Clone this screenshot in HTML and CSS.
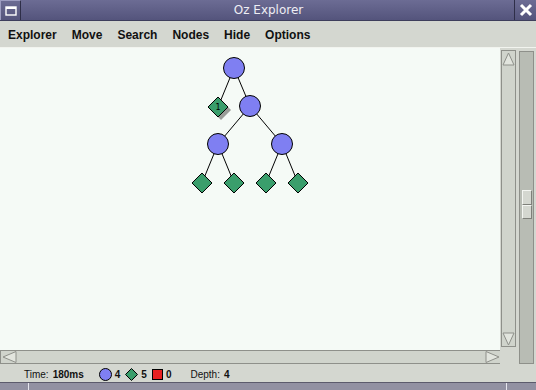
FILE: index.html
```html
<!DOCTYPE html>
<html lang="en">
<head>
    <meta charset="UTF-8">
    <meta name="viewport" content="width=device-width, initial-scale=1.0">
    <title>Oz Explorer</title>

    <link rel="stylesheet" href="styles.css">
</head>
<body>

    <div class="window">
        <div class="titlebar">
            <div class="title-btn title-menu">
                <svg width="12" height="10" viewBox="0 0 12 10">
                    <rect x="1" y="1" width="10" height="8" fill="none" stroke="#fff" stroke-width="1.4"/>
                    <line x1="1" y1="2" x2="11" y2="2" stroke="#fff" stroke-width="2"/>
                </svg>
            </div>
            <div class="title-text">Oz Explorer</div>
            <div class="title-btn title-close">
                <svg width="14" height="14" viewBox="0 0 14 14">
                    <path d="M2 2 L12 12 M12 2 L2 12" stroke="#fff" stroke-width="3"/>
                </svg>
            </div>
        </div>

        <div class="menubar">
            <span class="menu-item">Explorer</span>
            <span class="menu-item">Move</span>
            <span class="menu-item">Search</span>
            <span class="menu-item">Nodes</span>
            <span class="menu-item">Hide</span>
            <span class="menu-item">Options</span>
        </div>

        <div class="main">
            <div class="viewport">
                <div class="canvas">
                    <svg class="tree" width="500" height="302" viewBox="0 0 500 302">
                        <g stroke="#000" stroke-width="1">
                            <line x1="234" y1="20" x2="218" y2="59"/>
                            <line x1="234" y1="20" x2="250" y2="58"/>
                            <line x1="250" y1="58" x2="218" y2="96"/>
                            <line x1="250" y1="58" x2="282" y2="96"/>
                            <line x1="218" y1="96" x2="202" y2="135"/>
                            <line x1="218" y1="96" x2="234" y2="135"/>
                            <line x1="282" y1="96" x2="266" y2="135"/>
                            <line x1="282" y1="96" x2="298" y2="135"/>
                        </g>
                        <g fill="#7f7ff2" stroke="#000" stroke-width="1">
                            <circle cx="234" cy="20" r="10.5"/>
                            <circle cx="250" cy="58" r="10.5"/>
                            <circle cx="218" cy="96" r="10.5"/>
                            <circle cx="282" cy="96" r="10.5"/>
                        </g>
                        <path d="M221 52 L231 62 L221 72 L211 62 Z" fill="#9a9c98"/>
                        <g fill="#3a9e6c" stroke="#000" stroke-width="1">
                            <path d="M218 49 L228 59 L218 69 L208 59 Z"/>
                            <path d="M202 125 L212 135 L202 145 L192 135 Z"/>
                            <path d="M234 125 L244 135 L234 145 L224 135 Z"/>
                            <path d="M266 125 L276 135 L266 145 L256 135 Z"/>
                            <path d="M298 125 L308 135 L298 145 L288 135 Z"/>
                        </g>
                        <text x="218" y="62" class="node-label">1</text>
                    </svg>
                </div>
                <div class="hscroll">
                    <div class="arrow-btn">
                        <svg width="15" height="12" viewBox="0 0 15 12">
                            <path d="M1 6 L14 0.5 L14 11.5 Z" fill="#e2e5de" stroke="#8e908a"/>
                        </svg>
                    </div>
                    <div class="track"></div>
                    <div class="arrow-btn">
                        <svg width="15" height="12" viewBox="0 0 15 12">
                            <path d="M14 6 L1 0.5 L1 11.5 Z" fill="#e2e5de" stroke="#8e908a"/>
                        </svg>
                    </div>
                </div>
            </div>

            <div class="vscroll">
                <div class="arrow-btn">
                    <svg width="13" height="14" viewBox="0 0 13 14">
                        <path d="M6.5 1 L12 13 L1 13 Z" fill="#e2e5de" stroke="#8e908a"/>
                    </svg>
                </div>
                <div class="track"></div>
                <div class="arrow-btn">
                    <svg width="13" height="14" viewBox="0 0 13 14">
                        <path d="M6.5 13 L12 1 L1 1 Z" fill="#e2e5de" stroke="#8e908a"/>
                    </svg>
                </div>
            </div>

            <div class="scale">
                <div class="scale-thumb">
                    <div class="thumb-half"></div>
                    <div class="thumb-half"></div>
                </div>
            </div>
        </div>

        <div class="status">
            <span class="st-label">Time:</span>
            <b class="st-value">180ms</b>
            <span class="st-icon st-choice"></span>
            <b class="st-count">4</b>
            <svg class="st-icon st-solved" width="13" height="13" viewBox="0 0 13 13">
                <path d="M6.5 0.5 L12.5 6.5 L6.5 12.5 L0.5 6.5 Z" fill="#3a9e6c" stroke="#000"/>
            </svg>
            <b class="st-count">5</b>
            <span class="st-icon st-failed"></span>
            <b class="st-count">0</b>
            <span class="st-label st-depth">Depth:</span>
            <b class="st-count">4</b>
        </div>

        <div class="taskbar">
            <div class="task task-left"></div>
            <div class="task task-mid"></div>
            <div class="task"></div>
        </div>
    </div>

</body>
</html>
```

FILE: styles.css
```css
* {
    padding: 0;
    margin: 0;
    box-sizing: border-box;
}

body {
    background-color: #d4d7d0;
    font-family: "Liberation Sans", Arial, sans-serif;
}

.window {
    width: 536px;
    height: 390px;

    display: flex;
    flex-direction: column;

    background-color: #d4d7d0;
    overflow: hidden;
}

/* title bar */

.titlebar {
    height: 21px;
    display: flex;
    align-items: stretch;

    background: linear-gradient(to bottom, #6c6c94, #54547c);
    border-bottom: 1px solid #3e3e5c;
}

.title-btn {
    display: flex;
    align-items: center;
    justify-content: center;
}

.title-menu {
    width: 21px;
    border-top: 1px solid #9c9cc0;
    border-left: 1px solid #9c9cc0;
    border-right: 1px solid #2e2e48;
}

.title-close {
    width: 22px;
    border-left: 1px solid #2e2e48;
}

.title-text {
    flex: 1;
    text-align: center;
    padding-top: 3px;
    padding-left: 2px;

    font-family: "DejaVu Sans", sans-serif;
    font-size: 12px;
    color: #eeeef4;
}

/* menu bar */

.menubar {
    height: 27px;
    display: flex;
    align-items: center;
    gap: 15px;
    padding-left: 8px;
    padding-top: 1px;

    border-bottom: 1px solid #f2f4ef;
}

.menu-item {
    font-size: 12px;
    font-weight: bold;
    color: #111;
}

/* main area */

.main {
    height: 316px;
    display: flex;
}

.viewport {
    width: 500px;
    display: flex;
    flex-direction: column;
}

.canvas {
    height: 302px;
    background-color: #f5faf6;
}

.tree {
    display: block;
}

.node-label {
    font-family: "DejaVu Sans", sans-serif;
    font-size: 8px;
    text-anchor: middle;
    fill: #000;
}

.track {
    flex: 1;
    background-color: #d0d4cc;
}

.arrow-btn {
    display: flex;
    align-items: center;
    justify-content: center;
    background-color: #d0d4cc;
}

.hscroll {
    height: 14px;
    display: flex;

    border-top: 1px solid #8e908a;
    border-bottom: 1px solid #8e908a;
    border-left: 1px solid #8e908a;
}

.hscroll .arrow-btn {
    width: 16px;
}

.vscroll {
    width: 15px;
    margin: 2px 0 17px 1px;

    display: flex;
    flex-direction: column;

    border: 1px solid #8e908a;
}

.vscroll .arrow-btn {
    height: 15px;
}

.scale {
    width: 15px;
    margin: 3px 0 0 3px;
    padding: 138px 1px 0 2px;

    background-color: #b8bcb4;
    border: 1px solid #8e908a;
}

.scale-thumb {
    height: 29px;
    display: flex;
    flex-direction: column;
}

.thumb-half {
    flex: 1;
    background-color: #d4d7d0;
    border-top: 1px solid #f4f6f2;
    border-left: 1px solid #f4f6f2;
    border-bottom: 1px solid #7e807a;
    border-right: 1px solid #7e807a;
}

/* status bar */

.status {
    height: 18px;
    display: flex;
    align-items: center;
    padding-left: 24px;
    padding-top: 2px;

    font-size: 10px;
    color: #111;
}

.st-value {
    margin-left: 4px;
}

.st-icon {
    display: inline-block;
}

.st-choice {
    width: 13px;
    height: 13px;
    margin-left: 15px;

    background-color: #7f7ff2;
    border: 1px solid #000;
    border-radius: 50%;
}

.st-solved {
    margin-left: 5px;
}

.st-failed {
    width: 11px;
    height: 11px;
    margin-left: 5px;

    background-color: #e82020;
    border: 1px solid #000;
}

.st-count {
    margin-left: 3px;
}

.st-depth {
    margin-left: 19px;
}

.st-depth + .st-count {
    margin-left: 4px;
}

/* bottom strip */

.taskbar {
    flex: 1;
    display: flex;

    background-color: #9291a2;
    border-top: 1px solid #5c5b6c;
}

.task-left {
    width: 29px;
    border-right: 1px solid #e6e6ee;
}

.task-mid {
    width: 478px;
    border-right: 1px solid #e6e6ee;
}
```
